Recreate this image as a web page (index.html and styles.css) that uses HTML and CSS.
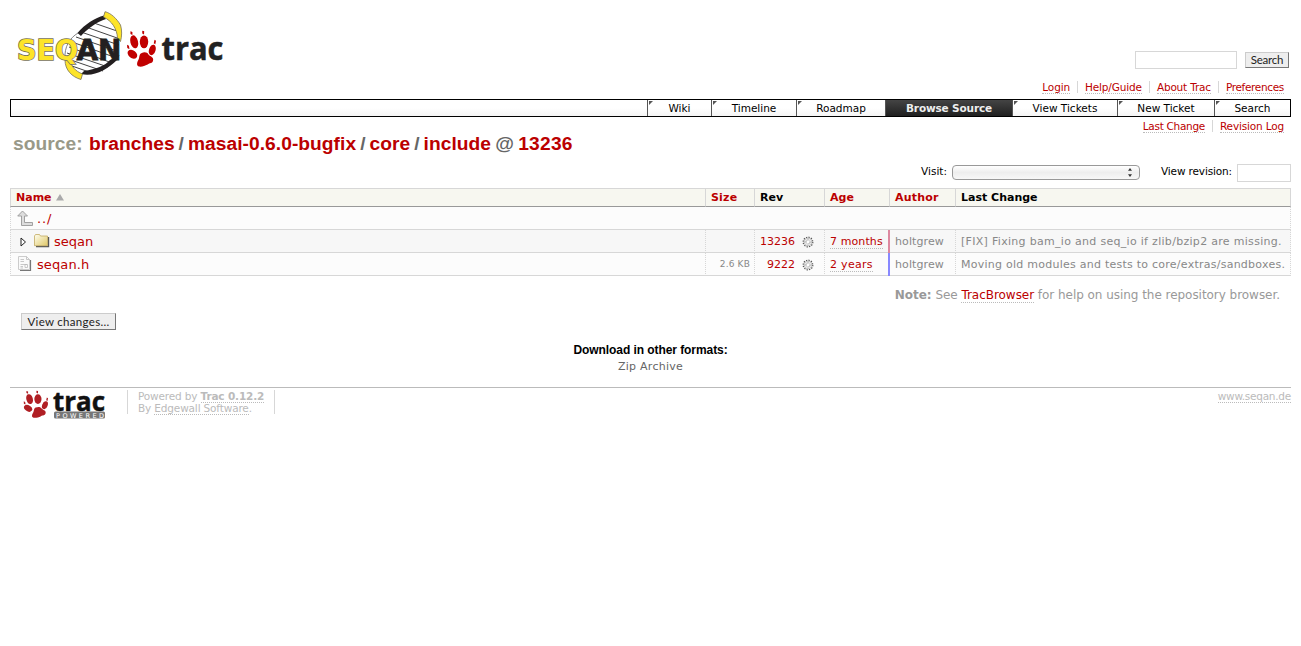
FILE: index.html
```html
<!DOCTYPE html>
<html lang="en">
<head>
<meta charset="utf-8">
<title>include in branches/masai-0.6.0-bugfix/core – SeqAn</title>
<link rel="stylesheet" href="styles.css">
</head>
<body>
<svg class="defs" width="0" height="0">
  <symbol id="paw" viewBox="0 0 30 37" preserveAspectRatio="none">
    <path d="M14.500 23C18 21.500 20.500 22 22 24.500C24 26.500 27.500 27 26.500 30.500C26 33.500 23 33 21 34.500C18 36 15 37 12 36.500C9.500 36 10 32.500 11.500 30C13 27.500 12 24.500 14.500 23Z"/>
    <ellipse cx="7.300" cy="11.500" rx="3.900" ry="6.700" transform="rotate(-14 7.300 11.500)"/>
    <ellipse cx="17.300" cy="11.500" rx="4.300" ry="6.500"/>
    <ellipse cx="5.500" cy="24" rx="3.900" ry="5.400" transform="rotate(-52 5.500 24)"/>
    <ellipse cx="25.700" cy="19.700" rx="3.300" ry="5.500" transform="rotate(18 25.700 19.700)"/>
    <path d="M3.500 .8L5.500 1.500 5.500 4.500 3.500 3.500zM15.500 0L17.500 .8 17.300 4 15.500 3zM28 9.500L29.500 10.500 28.800 14 27.200 13zM0 14.500L2 15.500 2.500 19 .3 17.800z"/>
  </symbol>
  <symbol id="gear" viewBox="0 0 12 12">
    <circle cx="6" cy="6" r="4.800" fill="none" stroke="#555" stroke-width="1.200" stroke-dasharray="1.300 1.200"/>
    <circle cx="6" cy="6" r="3.800" fill="#f4f4f4" stroke="#999" stroke-width=".6"/>
    <path d="M6 3.500L8.500 6 6 8.500 3.500 6Z" fill="#fff" stroke="#666" stroke-width=".9" stroke-dasharray="1 .8"/>
  </symbol>
</svg>

<header class="banner">
  <a class="logo">
    <svg width="230" height="90" viewBox="0 0 230 90">
      <path d="M104 16C92 20 84 26 78 33C70 41 66 50 65 60L72 64L83 75C98 74 112 68 118 57L120 42L117 33Z" fill="#fff"/>
      <path d="M91 22L117 31M86 27L120 39M81 32L119 45M76 37L117 51M72 42L114 57M69 47L112 63M67 53L108 67M68 59L103 71M72 66L92 73" stroke="#444" stroke-width="1"/>
      <path d="M104 15.500C95 18 85 24 77.500 33L81 36C88 28 97 22 106 19Z" fill="#231f20"/>
      <path d="M105 11.700C111 13 117 19 120.500 25C122 30 122 36 120.500 41.500L117.500 38C117 29 112 21 103.500 17Z" fill="#fde428" stroke="#777158" stroke-width=".8"/>
      <path d="M119.500 55L110 60C105 66 96 69 84 71L81 74C94 77 107 70 117 60Z" fill="#231f20"/>
      <path d="M65 60L70 60C71 66 75 71 82.500 74L81 79.500C72 77 65 70 65 60Z" fill="#fde428" stroke="#777158" stroke-width=".8"/>
      <path d="M65 60C64 46 70 38 78 33" fill="none" stroke="#666" stroke-width=".8"/>
      <text class="seq" x="17" y="59.500" textLength="61" lengthAdjust="spacingAndGlyphs">SEQ</text>
      <text class="an" x="76.500" y="59.500" textLength="45" lengthAdjust="spacingAndGlyphs">AN</text>
      <use href="#paw" x="127" y="30.500" width="29.500" height="36.500" fill="#c10000"/>
      <text class="trac" x="161.500" y="59.500" textLength="62" lengthAdjust="spacingAndGlyphs">trac</text>
    </svg>
  </a>
  <div class="tools">
    <form class="search"><input class="field query" type="text"><button class="btn search-btn" type="button">Search</button></form>
    <ul class="metanav">
      <li><a class="link">Login</a></li><li><a class="link">Help/Guide</a></li><li><a class="link about">About Trac</a></li><li><a class="link prefs">Preferences</a></li>
    </ul>
  </div>
</header>

<nav class="mainnav">
  <a class="tab wiki">Wiki</a><a class="tab timeline">Timeline</a><a class="tab roadmap">Roadmap</a><a class="tab source active">Browse Source</a><a class="tab tickets">View Tickets</a><a class="tab newticket">New Ticket</a><a class="tab find">Search</a>
</nav>

<main>
  <ul class="metanav ctxtnav"><li><a class="link change">Last Change</a></li><li><a class="link revlog">Revision Log</a></li></ul>
  <h1><span class="first">source:</span> <a>branches</a><i>/</i><a>masai-0.6.0-bugfix</a><i>/</i><a>core</a><i>/</i><a>include</a><span class="at">@</span><a class="num">13236</a></h1>
  <div class="jump">
    <label>Visit:</label>
    <span class="select"><svg width="6" height="9" viewBox="0 0 6 9"><path d="M3 0L5 2.700H1zM3 9L1 6.300H5z" fill="#333"/></svg></span>
    <label class="revlabel">View revision:</label>
    <input class="field rev" type="text">
  </div>

  <table class="listing">
    <colgroup><col class="c-name"><col class="c-size"><col class="c-rev"><col class="c-age"><col class="c-author"><col class="c-change"></colgroup>
    <thead><tr><th><a>Name</a><svg class="asc" width="8" height="7" viewBox="0 0 8 7"><path d="M4 0L8 6.500H0z" fill="#aaa"/></svg></th><th><a class="wide">Size</a></th><th>Rev</th><th><a>Age</a></th><th><a class="wide">Author</a></th><th>Last Change</th></tr></thead>
    <tbody>
      <tr><td class="last" colspan="6"><div class="name up"><svg width="16" height="16" viewBox="0 0 16 16"><path d="M5.500 1L10.500 6H7.500V12.500H15.500V15.500H4.500V6H.7Z" fill="#ddd" stroke="#999" stroke-width=".9"/></svg><a>../</a></div></td></tr>
      <tr class="even"><td><div class="name dir"><svg class="expander" width="7" height="10" viewBox="0 0 7 10"><path d="M1 1L5.500 5 1 9Z" fill="#fff" stroke="#222"/></svg><svg width="16" height="16" viewBox="0 0 16 16"><defs><linearGradient id="folder" x2="1" y2="1"><stop stop-color="#fffef0"/><stop offset="1" stop-color="#dfc868"/></linearGradient></defs><path d="M2 13.500H14.500V4" fill="none" stroke="#555" stroke-width="1.400"/><path d="M.5 3L1.500 1.500H5.500L6.500 3H13.500V12.700H.5Z" fill="url(#folder)" stroke="#c3ab62" stroke-width=".8"/></svg><a>seqan</a></div></td><td></td><td class="r"><a>13236</a><svg class="gear" width="12" height="12"><use href="#gear"/></svg></td><td><a class="link months">7 months</a></td><td class="author new">holtgrew</td><td class="msg last">[FIX] Fixing bam_io and seq_io if zlib/bzip2 are missing.</td></tr>
      <tr><td><div class="name file"><svg width="16" height="16" viewBox="0 0 16 16"><path d="M3 14.500H13.500V4" fill="none" stroke="#777" stroke-width="1.200"/><path d="M1.500 .5H9.500L12.500 3.500V13.500H1.500Z" fill="#fafafa" stroke="#ccc"/><path d="M9.500 .5V3.500H12.500M3.500 3.500H7M3.500 5.500H7M3.500 8.500H10M3.500 10.500H6M3.500 12H6M8 8.500H10.500V11.500H8Z" fill="none" stroke="#bbb" stroke-width=".8"/></svg><a>seqan.h</a></div></td><td class="size">2.6 KB</td><td class="r"><a>9222</a><svg class="gear" width="12" height="12"><use href="#gear"/></svg></td><td><a class="link years">2 years</a></td><td class="author old">holtgrew</td><td class="msg second last">Moving old modules and tests to core/extras/sandboxes.</td></tr>
    </tbody>
  </table>

  <p class="help"><strong>Note:</strong> See <a class="link">TracBrowser</a> for help on using the repository browser.</p>
  <button class="btn changes" type="button">View changes...</button>
</main>

<section class="altlinks"><h3>Download in other formats:</h3><a>Zip Archive</a></section>

<footer>
  <svg class="powered" width="107" height="31" viewBox="0 0 107 31">
    <use href="#paw" x="13.500" y="1.500" width="25" height="27.500" fill="#b01f24"/>
    <text class="trac-small" x="43" y="21.500" textLength="52" lengthAdjust="spacingAndGlyphs">trac</text>
    <rect x="44" y="22.500" width="51" height="7" rx="1.500" fill="#777"/>
    <text class="powered-text" x="46" y="28.700" textLength="48">POWERED</text>
  </svg>
  <p class="left">Powered by <a class="link"><strong>Trac 0.12.2</strong></a><br>By <a class="link">Edgewall Software</a>.</p>
  <p class="right"><a class="link">www.seqan.de</a></p>
</footer>
</body>
</html>
```
FILE: styles.css
```css
* { box-sizing: border-box; }
body { margin: 0; padding: 0 10px; background: #fff; color: #000; font: 11px/14px "DejaVu Sans", sans-serif; overflow: hidden; }
.defs { display: block; height: 0; }
a { color: #b00; }
svg { flex: none; overflow: visible; }
.link { border-bottom: 1px dotted #bbb; }

.banner { display: flex; justify-content: space-between; height: 99px; }
.logo { margin-left: -10px; }
.seq, .an { font: bold 28px "DejaVu Sans", sans-serif; }
.seq { fill: #fde428; stroke: #777158; stroke-width: 1.600px; paint-order: stroke; }
.an { fill: #231f20; stroke: #231f20; stroke-width: .8px; }
.trac { font: bold 31.500px "Open Sans", sans-serif; fill: #222; stroke: #222; stroke-width: .5px; }

.tools { display: flex; flex-direction: column; align-items: flex-end; padding-top: 51px; }
.search { display: flex; gap: 8px; margin-right: 2px; }
.field { border: 1px solid #d7d7d7; background: #fff; padding: 0; height: 18px; }
.query { width: 102px; }
.btn { padding: 0; border: 1px solid #ccc; border-right-color: #777; border-bottom-color: #777; background: #eee; color: #222; font: 11.500px/14px Lato, sans-serif; }
.search-btn { width: 44px; height: 16px; margin-top: 1px; letter-spacing: -.2px; }
.metanav { display: flex; margin: 11px 0 0; padding: 0; list-style: none; height: 14px; }
.metanav li { display: flex; align-items: center; padding: 0 7px; border-left: 1px solid #d7d7d7; height: 12px; margin-top: 1px; }
.metanav li:first-child { border-left: 0; }
.metanav .link { height: 13px; line-height: 13px; font-size: 10.500px; white-space: nowrap; letter-spacing: -.14px; }
.metanav .about { letter-spacing: -.18px; }
.metanav .prefs { letter-spacing: -.33px; }
.metanav .change { letter-spacing: -.3px; }
.metanav .revlog { letter-spacing: -.16px; }

.mainnav { display: flex; justify-content: flex-end; height: 18px; border: 1px solid #000; background: linear-gradient(#fff 50%, #f4f4f4); }
.tab { position: relative; border-left: 1px solid #555; color: #000; text-align: center; font-size: 10.500px; line-height: 17px; height: 16px; }
.tab::before { content: ""; position: absolute; left: 1px; top: 1px; border-top: 4px solid #555; border-right: 4px solid transparent; }
.wiki { width: 64px; } .timeline { width: 85px; } .roadmap { width: 89px; } .source { width: 127px; }
.tickets { width: 105px; } .newticket { width: 97px; } .find { width: 76px; }
.active { background: linear-gradient(#444, #202020); color: #eee; font-weight: bold; letter-spacing: -.15px; }
.active::before { display: none; }

.ctxtnav { justify-content: flex-end; margin-top: 2px; }
h1 { margin: 0; padding-left: 3px; height: 30px; font: bold 19.200px/21px "Liberation Sans", Arial, sans-serif; letter-spacing: .04px; white-space: nowrap; }
h1 i { font-style: normal; color: #666; padding: 0 4px; }
h1 .first { color: #998; margin-right: 1px; }
h1 .at { color: #666; padding: 0 4.200px; }
h1 .num { letter-spacing: .25px; }
.jump { display: flex; justify-content: flex-end; height: 24px; margin-top: 1px; }
.select { display: flex; justify-content: flex-end; align-items: center; width: 188px; height: 15px; margin: 1px 21px 0 5px; padding-right: 6px; border: 1px solid #999; border-radius: 4px; background: linear-gradient(#fff, #eee 50%, #f8f8f8); }
.rev { width: 54px; margin-left: 5px; }
.jump label { font-size: 10.500px; }
.revlabel { letter-spacing: -.14px; }

.listing { width: 1281px; table-layout: fixed; border-spacing: 0; border-top: 1px solid #d7d7d7; }
.c-name { width: 695px; } .c-size { width: 49px; } .c-rev { width: 70px; } .c-age { width: 65px; } .c-author { width: 66px; } .c-change { width: 336px; }
.listing th { height: 18px; padding: 1px 5px 0; border-left: 1px solid #d7d7d7; border-bottom: 1px solid #999; background: #f7f7f0; text-align: left; font-size: 11px; line-height: 16px; }
.listing th:last-child { border-right: 1px solid #d7d7d7; }
.asc { margin-left: 4px; }
.wide { letter-spacing: .2px; }
.listing td { height: 23px; padding: 2px 5px 0; border-left: 1px dotted #d7d7d7; border-bottom: 1px solid #d7d7d7; background: #fcfcfc; white-space: nowrap; line-height: 14px; }
.listing .even td { background: #f7f7f7; }
.listing td.last { border-right: 1px dotted #d7d7d7; }
.listing td.r { text-align: right; padding-right: 10px; }
.name { display: flex; align-items: center; gap: 4px; height: 16px; font-size: 13px; padding-left: 1px; }
.name > svg { margin-top: -2px; }
.up { letter-spacing: .9px; }
.file { letter-spacing: .1px; }
.name > .expander { margin: 0 3px; }
.gear { vertical-align: -3px; margin-left: 7px; }
.months { letter-spacing: .1px; }
.years { letter-spacing: .3px; }
.listing td.size { color: #888; font-size: 9px; text-align: right; padding-right: 4px; padding-top: 0; letter-spacing: .15px; }
.listing td.author, .listing td.msg { color: #888; }
.listing td.msg { letter-spacing: .3px; }
.listing td.second { letter-spacing: .25px; }
.listing td.new, .listing td.old { position: relative; border-left: 0; padding-left: 6px; letter-spacing: .1px; }
.new::before, .old::before { content: ""; position: absolute; left: -1px; top: 0; bottom: -1px; width: 2px; background: #dd88a0; }
.old::before { background: #88f; }

.help { margin: 11px 11px 0; height: 16px; line-height: 16px; text-align: right; color: #999; font-size: 12px; letter-spacing: -.04px; }
.changes { display: block; width: 95px; height: 17px; margin: 10px 0 0 11px; font-size: 11.500px; letter-spacing: .3px; }

.altlinks { height: 44px; margin-top: 13px; text-align: center; }
.altlinks h3 { margin: 0 0 3px; font: bold 12px/14px "Liberation Sans", Arial, sans-serif; letter-spacing: -.07px; }
.altlinks a { color: #666; letter-spacing: .25px; }

footer { display: flex; border-top: 1px solid #bbb; color: #bbb; font-size: 10.500px; line-height: 12px; }
footer a { color: #bbb; }
footer p { margin: 2px 0 0; white-space: nowrap; height: 24px; letter-spacing: -.15px; }
footer .left { width: 148px; margin-left: 10px; padding-left: 10px; border: solid #d7d7d7; border-width: 0 1px; }
footer .right { margin-left: auto; letter-spacing: -.25px; }
.powered { margin-top: 1px; }
.trac-small { font: bold 27px "Open Sans", sans-serif; fill: #111; stroke: #111; stroke-width: .5px; }
.powered-text { font: 6.500px "DejaVu Sans", sans-serif; fill: #fff; }
```
